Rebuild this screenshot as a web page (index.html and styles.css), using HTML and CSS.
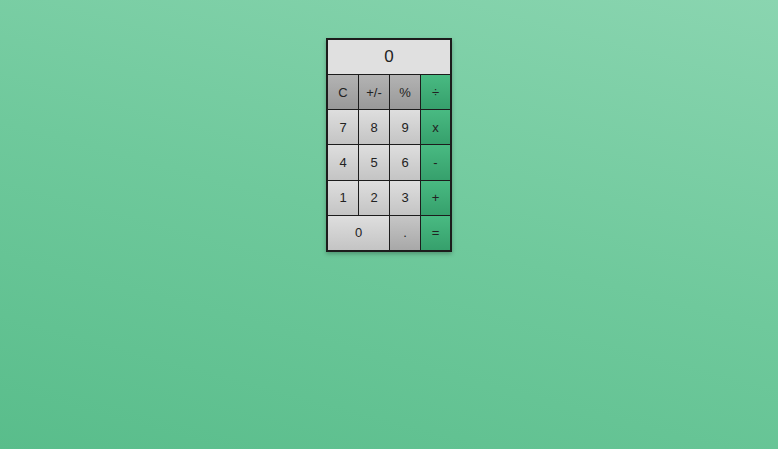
FILE: index.html
```
<!DOCTYPE html>
<html>
<head>
<meta charset="utf-8">
<link rel="stylesheet" href="styles.css">
</head>
<body>
<div class="calc">
  <div class="display">0</div>
  <div class="keys">
    <button class="key fn">C</button>
    <button class="key fn">+/-</button>
    <button class="key fn">%</button>
    <button class="key op">÷</button>
    <button class="key num">7</button>
    <button class="key num">8</button>
    <button class="key num">9</button>
    <button class="key op">x</button>
    <button class="key num">4</button>
    <button class="key num">5</button>
    <button class="key num">6</button>
    <button class="key op">-</button>
    <button class="key num">1</button>
    <button class="key num">2</button>
    <button class="key num">3</button>
    <button class="key op">+</button>
    <button class="key num wide">0</button>
    <button class="key dot">.</button>
    <button class="key op">=</button>
  </div>
</div>
</body>
</html>
```
FILE: styles.css
```
html, body {
  margin: 0;
  height: 100%;
}
body {
  background: linear-gradient(195deg, #8ad5b0 0%, #6fc99c 50%, #59bd8b 100%);
  font-family: "Liberation Sans", Arial, sans-serif;
  display: flex;
  justify-content: center;
  align-items: flex-start;
}
.calc {
  margin-top: 38px;
  width: 122px;
  border: 2px solid #1c1c1c;
  background: #1c1c1c;
  box-shadow: 0 2px 4px rgba(0, 0, 0, 0.25);
  display: flex;
  flex-direction: column;
  gap: 1px;
}
.display {
  height: 34px;
  background: #e0e0e0;
  color: #222;
  font-size: 17px;
  display: flex;
  align-items: center;
  justify-content: center;
}
.keys {
  display: grid;
  grid-template-columns: 30px 30px 30px 29px;
  grid-auto-rows: 34.2px;
  gap: 1px;
}
.key {
  border: 0;
  margin: 0;
  padding: 0;
  font-family: "Liberation Sans", Arial, sans-serif;
  font-size: 13px;
  color: #222;
  display: flex;
  align-items: center;
  justify-content: center;
}
.fn {
  background: linear-gradient(#b3b3b3, #999999);
}
.num {
  background: linear-gradient(#dedede, #c4c4c4);
}
.dot {
  background: linear-gradient(#c6c6c6, #a8a8a8);
}
.op {
  background: linear-gradient(#49ba82, #36a06c);
}
.wide {
  grid-column: span 2;
}
```
